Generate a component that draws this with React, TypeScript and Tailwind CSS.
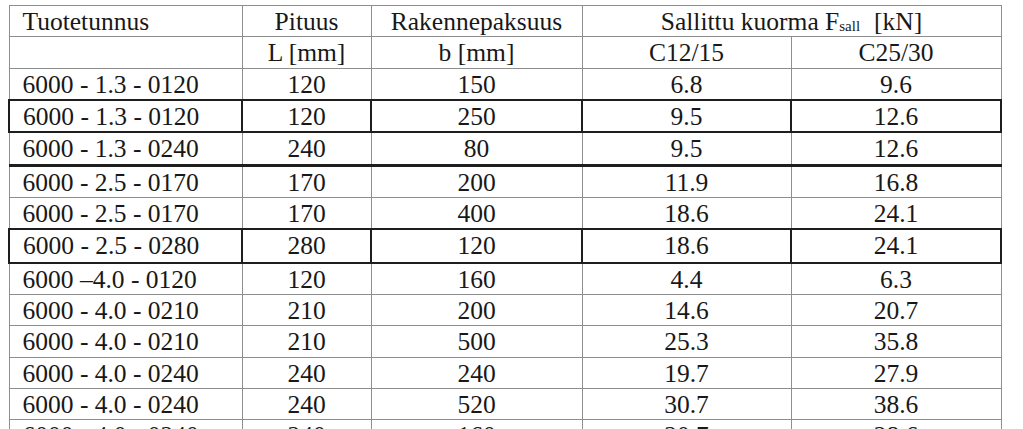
import type { ReactNode } from 'react';

type Kind = 'plain' | 'box' | 'under';

type Row = {
  code: string;
  len: string;
  thick: string;
  c12: string;
  c25: string;
  h: string;
  kind: Kind;
};

const rows: Row[] = [
  { code: '6000 - 1.3 - 0120', len: '120', thick: '150', c12: '6.8', c25: '9.6', h: 'h-[31px]', kind: 'plain' },
  { code: '6000 - 1.3 - 0120', len: '120', thick: '250', c12: '9.5', c25: '12.6', h: 'h-[32px]', kind: 'box' },
  { code: '6000 - 1.3 - 0240', len: '240', thick: '80', c12: '9.5', c25: '12.6', h: 'h-[33px]', kind: 'under' },
  { code: '6000 - 2.5 - 0170', len: '170', thick: '200', c12: '11.9', c25: '16.8', h: 'h-[32px]', kind: 'plain' },
  { code: '6000 - 2.5 - 0170', len: '170', thick: '400', c12: '18.6', c25: '24.1', h: 'h-[32px]', kind: 'plain' },
  { code: '6000 - 2.5 - 0280', len: '280', thick: '120', c12: '18.6', c25: '24.1', h: 'h-[34px]', kind: 'box' },
  { code: '6000 –4.0 - 0120', len: '120', thick: '160', c12: '4.4', c25: '6.3', h: 'h-[31px]', kind: 'plain' },
  { code: '6000 - 4.0 - 0210', len: '210', thick: '200', c12: '14.6', c25: '20.7', h: 'h-[31px]', kind: 'plain' },
  { code: '6000 - 4.0 - 0210', len: '210', thick: '500', c12: '25.3', c25: '35.8', h: 'h-[32px]', kind: 'plain' },
  { code: '6000 - 4.0 - 0240', len: '240', thick: '240', c12: '19.7', c25: '27.9', h: 'h-[31px]', kind: 'plain' },
  { code: '6000 - 4.0 - 0240', len: '240', thick: '520', c12: '30.7', c25: '38.6', h: 'h-[31px]', kind: 'plain' },
  { code: '6000 - 4.0 - 0240', len: '240', thick: '160', c12: '20.7', c25: '28.6', h: 'h-[32px]', kind: 'plain' },
];

const thin = 'border border-[#8e8e8e]';

function Cell({
  children,
  kind = 'plain',
  left,
  colSpan,
}: {
  children?: ReactNode;
  kind?: Kind;
  left?: boolean;
  colSpan?: number;
}) {
  const border =
    kind === 'box'
      ? 'border-2 border-[#1e1e1e]'
      : kind === 'under'
        ? 'border border-[#8e8e8e] border-b-[3px] border-b-[#1e1e1e]'
        : thin;
  return (
    <td
      colSpan={colSpan}
      className={`${border} p-0 pt-[2px] align-top leading-[28px] whitespace-nowrap ${
        left ? 'pl-[13px] text-left' : 'text-center'
      }`}
    >
      {children}
    </td>
  );
}

export default function App() {
  return (
    <div className="h-[429px] w-[1023px] overflow-hidden bg-white pl-[8px] pt-[5px]">
      <table className="w-[992px] table-fixed border-collapse font-['Liberation_Serif',serif] text-[25.5px] text-[#181818]">
        <colgroup>
          <col className="w-[233px]" />
          <col className="w-[129px]" />
          <col className="w-[211px]" />
          <col className="w-[209px]" />
          <col className="w-[210px]" />
        </colgroup>
        <tbody>
          <tr className="h-[31px]">
            <Cell left>Tuotetunnus</Cell>
            <Cell>Pituus</Cell>
            <Cell>Rakennepaksuus</Cell>
            <Cell colSpan={2}>
              Sallittu kuorma F
              <sub className="relative -bottom-[1px] align-baseline text-[15px]">sall</sub>
              <span className="pl-[14px]">[kN]</span>
            </Cell>
          </tr>
          <tr className="h-[32px]">
            <Cell left />
            <Cell>L [mm]</Cell>
            <Cell>b [mm]</Cell>
            <Cell>C12/15</Cell>
            <Cell>C25/30</Cell>
          </tr>
          {rows.map((r, i) => (
            <tr key={i} className={r.h}>
              <Cell kind={r.kind} left>
                {r.code}
              </Cell>
              <Cell kind={r.kind}>{r.len}</Cell>
              <Cell kind={r.kind}>{r.thick}</Cell>
              <Cell kind={r.kind}>{r.c12}</Cell>
              <Cell kind={r.kind}>{r.c25}</Cell>
            </tr>
          ))}
        </tbody>
      </table>
    </div>
  );
}
